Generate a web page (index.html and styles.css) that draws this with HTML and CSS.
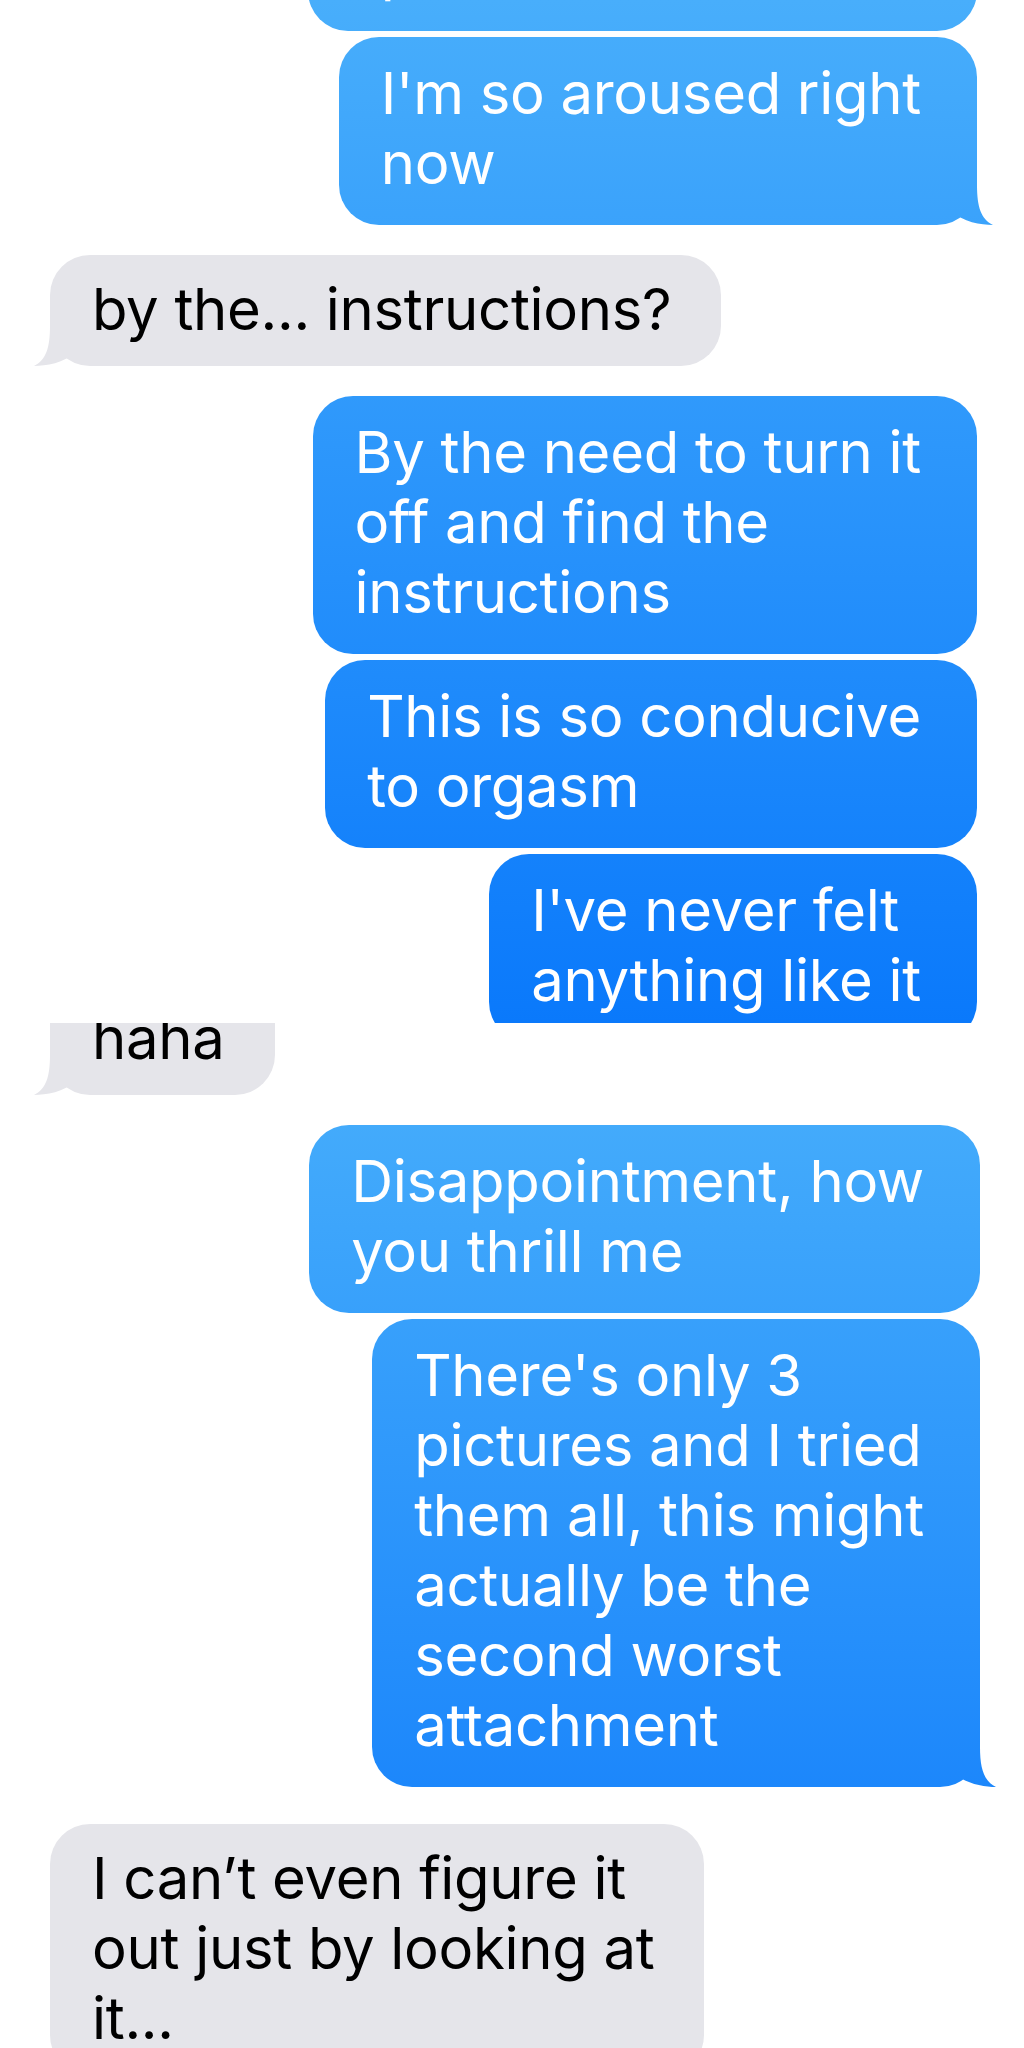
FILE: index.html
```html
<!DOCTYPE html>
<html lang="en">
<head>
<meta charset="utf-8">
<title>Messages</title>
<link rel="stylesheet" href="styles.css">
</head>
<body>
<main class="thread">
  <section class="screen screen-one" aria-label="Conversation, first screenshot">
    <div class="stack stack-one">
      <div class="bubble sent cut-top"><p class="text">I pressed the buttons</p></div>
      <div class="bubble sent"><p class="text">I'm so aroused right<br>now</p><span class="tail" aria-hidden="true"></span></div>
      <div class="bubble received group-start"><p class="text">by the... instructions?</p><span class="tail" aria-hidden="true"></span></div>
      <div class="bubble sent group-start"><p class="text">By the need to turn it<br>off and find the<br>instructions</p></div>
      <div class="bubble sent"><p class="text">This is so conducive<br>to orgasm</p></div>
      <div class="bubble sent"><p class="text">I've never felt<br>anything like it</p></div>
    </div>
  </section>
  <section class="screen screen-two" aria-label="Conversation, second screenshot">
    <div class="stack stack-two">
      <div class="bubble received cut-top-two"><p class="text">haha</p><span class="tail" aria-hidden="true"></span></div>
      <div class="bubble sent group-start"><p class="text">Disappointment, how<br>you thrill me</p></div>
      <div class="bubble sent"><p class="text">There's only 3<br>pictures and I tried<br>them all, this might<br>actually be the<br>second worst<br>attachment</p><span class="tail" aria-hidden="true"></span></div>
      <div class="bubble received wide-gap"><p class="text">I can’t even figure it<br>out just by looking at<br>it...</p></div>
    </div>
  </section>
</main>
</body>
</html>
```

FILE: styles.css
```css
* {
  box-sizing: border-box;
  margin: 0;
  padding: 0;
}

html,
body {
  background: #ffffff;
}

body {
  width: 1024px;
  height: 2048px;
  overflow: hidden;
  font-family: "Inter", "Liberation Sans", sans-serif;
  -webkit-font-smoothing: antialiased;
}

.thread {
  display: flex;
  flex-direction: column;
}

.screen {
  position: relative;
  overflow: hidden;
}

.screen-one {
  height: 1023px;
  padding: 0 47px 0 50px;
}

.screen-two {
  height: 1025px;
  padding: 0 44px 0 50px;
}

.stack {
  display: flex;
  flex-direction: column;
  gap: 6px;
}

.bubble {
  position: relative;
  border-radius: 40px;
  font-size: 58px;
  line-height: 70px;
  letter-spacing: -0.3px;
  white-space: nowrap;
}

.text {
  position: relative;
  z-index: 1;
}

.sent {
  align-self: flex-end;
  color: #ffffff;
  padding: 21px 56px 27px 42px;
}

.received {
  align-self: flex-start;
  color: #000000;
  background: #e5e5ea;
  padding: 19px 50px 22px 42px;
}

.screen-one .sent,
.screen-one .sent .tail {
  background: linear-gradient(180deg, rgb(72, 174, 251) 0px, rgb(10, 121, 251) 1023px) fixed;
}

.screen-two .sent,
.screen-two .sent .tail {
  background: linear-gradient(180deg, rgb(73, 176, 251) 1023px, rgb(13, 121, 251) 2048px) fixed;
}

.group-start {
  margin-top: 24px;
}

.wide-gap {
  margin-top: 31px;
}

.cut-top {
  margin-top: -87px;
}

.cut-top-two {
  margin-top: -39px;
}

.tail {
  position: absolute;
  bottom: 0;
  width: 44px;
  height: 40px;
}

.sent .tail {
  right: -17px;
  clip-path: path("M27 0 C27 22 31 34 43 40 C31 40 13 37 1 26 L1 0 Z");
}

.received .tail {
  left: -17px;
  background: #e5e5ea;
  clip-path: path("M17 0 C17 22 13 34 1 40 C13 40 31 37 43 26 L43 0 Z");
}
```
